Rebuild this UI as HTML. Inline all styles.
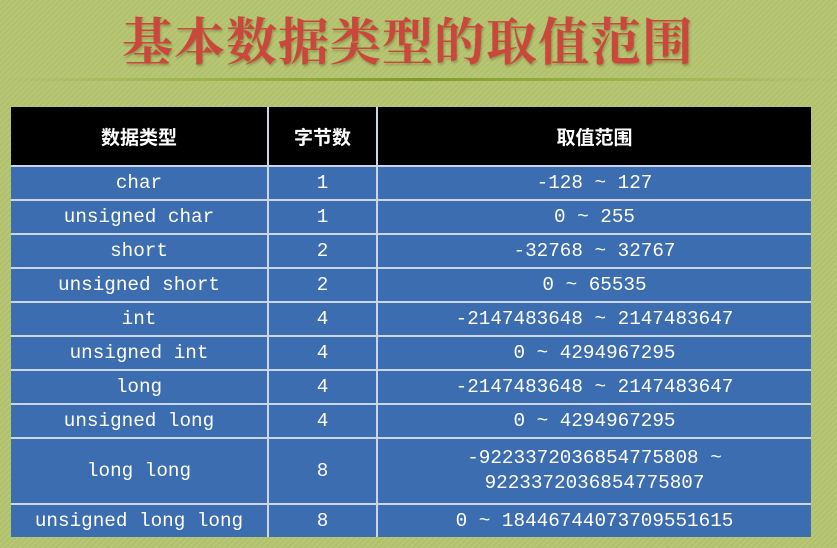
<!DOCTYPE html>
<html><head><meta charset="utf-8"><style>
html,body{margin:0;padding:0}
body{width:837px;height:548px;overflow:hidden;position:relative;
background:#b3c46f;background-image:repeating-linear-gradient(135deg,rgba(255,255,255,0.05) 0 2px,rgba(0,0,0,0.02) 2px 4px);}
.title{position:absolute;left:122px;top:8px;font-family:"Noto Serif CJK SC",serif;font-weight:bold;font-size:51px;line-height:60px;letter-spacing:1px;color:#c9473b;text-shadow:1px 2px 2px rgba(90,60,20,0.35);white-space:nowrap}
.line{position:absolute;left:0;top:78px;width:837px;height:3px;background:linear-gradient(90deg,rgba(140,160,60,0) 0%,#93ab3e 35%,#7f9a30 50%,#93ab3e 65%,rgba(140,160,60,0) 100%)}
table{position:absolute;left:11px;top:107px;border-collapse:collapse;width:800px}
td,th{border:2px solid #c9d6ea;text-align:center;padding:0;color:#fff}
th{background:#000;height:58px;font-family:"Noto Sans CJK SC",sans-serif;font-size:19px;font-weight:bold;border-top:none}
td{background:#3c6db0;font-family:"Liberation Mono",monospace;font-size:19.3px;height:32px;line-height:25px}
tr td:first-child,tr th:first-child{border-left:none}
tr td:last-child,tr th:last-child{border-right:none}
tr:last-child td{border-bottom:none}
</style></head><body>
<div class="title">基本数据类型的取值范围</div>
<div class="line"></div>
<table>
<colgroup><col style="width:257px"><col style="width:109px"><col style="width:434px"></colgroup>
<tr><th>数据类型</th><th>字节数</th><th>取值范围</th></tr>
<tr><td>char</td><td>1</td><td>-128 ~ 127</td></tr>
<tr><td>unsigned char</td><td>1</td><td>0 ~ 255</td></tr>
<tr><td>short</td><td>2</td><td>-32768 ~ 32767</td></tr>
<tr><td>unsigned short</td><td>2</td><td>0 ~ 65535</td></tr>
<tr><td>int</td><td>4</td><td>-2147483648 ~ 2147483647</td></tr>
<tr><td>unsigned int</td><td>4</td><td>0 ~ 4294967295</td></tr>
<tr><td>long</td><td>4</td><td>-2147483648 ~ 2147483647</td></tr>
<tr><td>unsigned long</td><td>4</td><td>0 ~ 4294967295</td></tr>
<tr><td style="height:64px">long long</td><td>8</td><td>-9223372036854775808 ~<br>9223372036854775807</td></tr>
<tr><td>unsigned long long</td><td>8</td><td>0 ~ 18446744073709551615</td></tr>
</table>
</body></html>
